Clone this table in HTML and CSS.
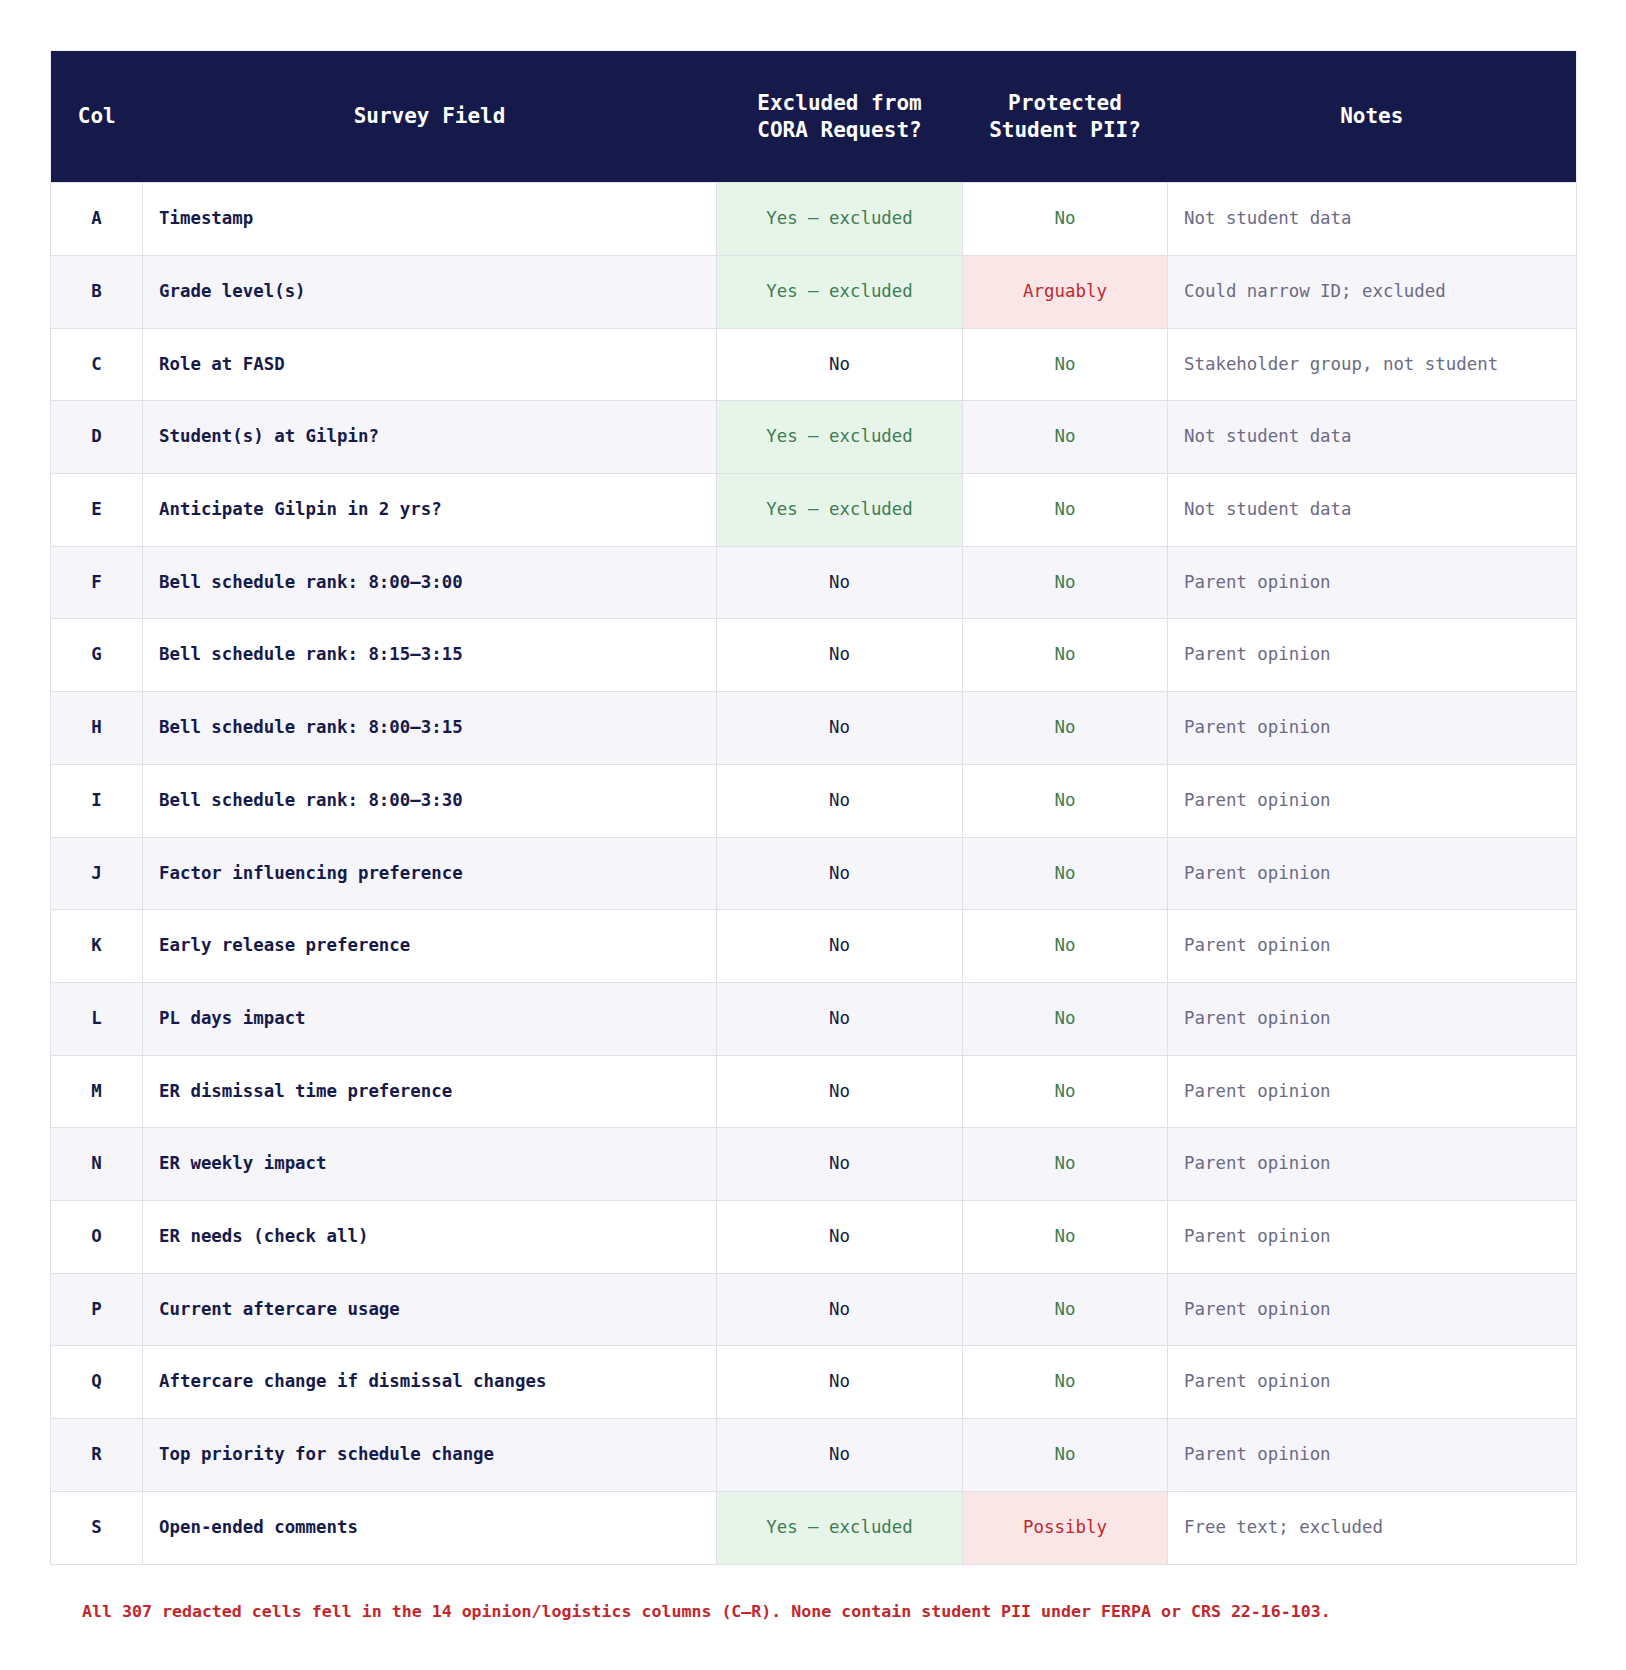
FILE: index.html
```html
<!DOCTYPE html>
<html lang="en">
<head>
<meta charset="utf-8">
<title>CORA Survey Field Review</title>
<link rel="stylesheet" href="styles.css">
</head>
<body>
<div class="page">
  <table class="fields">
    <colgroup>
      <col class="c-col">
      <col class="c-field">
      <col class="c-excl">
      <col class="c-pii">
      <col class="c-notes">
    </colgroup>
    <thead>
      <tr>
        <th>Col</th>
        <th>Survey Field</th>
        <th>Excluded from<br>CORA Request?</th>
        <th>Protected<br>Student PII?</th>
        <th>Notes</th>
      </tr>
    </thead>
    <tbody>
      <tr><td class="letter">A</td><td class="field">Timestamp</td><td class="yes">Yes — excluded</td><td class="no-g">No</td><td class="note">Not student data</td></tr>
      <tr><td class="letter">B</td><td class="field">Grade level(s)</td><td class="yes">Yes — excluded</td><td class="risk">Arguably</td><td class="note">Could narrow ID; excluded</td></tr>
      <tr><td class="letter">C</td><td class="field">Role at FASD</td><td class="no">No</td><td class="no-g">No</td><td class="note">Stakeholder group, not student</td></tr>
      <tr><td class="letter">D</td><td class="field">Student(s) at Gilpin?</td><td class="yes">Yes — excluded</td><td class="no-g">No</td><td class="note">Not student data</td></tr>
      <tr><td class="letter">E</td><td class="field">Anticipate Gilpin in 2 yrs?</td><td class="yes">Yes — excluded</td><td class="no-g">No</td><td class="note">Not student data</td></tr>
      <tr><td class="letter">F</td><td class="field">Bell schedule rank: 8:00–3:00</td><td class="no">No</td><td class="no-g">No</td><td class="note">Parent opinion</td></tr>
      <tr><td class="letter">G</td><td class="field">Bell schedule rank: 8:15–3:15</td><td class="no">No</td><td class="no-g">No</td><td class="note">Parent opinion</td></tr>
      <tr><td class="letter">H</td><td class="field">Bell schedule rank: 8:00–3:15</td><td class="no">No</td><td class="no-g">No</td><td class="note">Parent opinion</td></tr>
      <tr><td class="letter">I</td><td class="field">Bell schedule rank: 8:00–3:30</td><td class="no">No</td><td class="no-g">No</td><td class="note">Parent opinion</td></tr>
      <tr><td class="letter">J</td><td class="field">Factor influencing preference</td><td class="no">No</td><td class="no-g">No</td><td class="note">Parent opinion</td></tr>
      <tr><td class="letter">K</td><td class="field">Early release preference</td><td class="no">No</td><td class="no-g">No</td><td class="note">Parent opinion</td></tr>
      <tr><td class="letter">L</td><td class="field">PL days impact</td><td class="no">No</td><td class="no-g">No</td><td class="note">Parent opinion</td></tr>
      <tr><td class="letter">M</td><td class="field">ER dismissal time preference</td><td class="no">No</td><td class="no-g">No</td><td class="note">Parent opinion</td></tr>
      <tr><td class="letter">N</td><td class="field">ER weekly impact</td><td class="no">No</td><td class="no-g">No</td><td class="note">Parent opinion</td></tr>
      <tr><td class="letter">O</td><td class="field">ER needs (check all)</td><td class="no">No</td><td class="no-g">No</td><td class="note">Parent opinion</td></tr>
      <tr><td class="letter">P</td><td class="field">Current aftercare usage</td><td class="no">No</td><td class="no-g">No</td><td class="note">Parent opinion</td></tr>
      <tr><td class="letter">Q</td><td class="field">Aftercare change if dismissal changes</td><td class="no">No</td><td class="no-g">No</td><td class="note">Parent opinion</td></tr>
      <tr><td class="letter">R</td><td class="field">Top priority for schedule change</td><td class="no">No</td><td class="no-g">No</td><td class="note">Parent opinion</td></tr>
      <tr><td class="letter">S</td><td class="field">Open-ended comments</td><td class="yes">Yes — excluded</td><td class="risk">Possibly</td><td class="note">Free text; excluded</td></tr>
    </tbody>
  </table>
  <p class="footnote">All 307 redacted cells fell in the 14 opinion/logistics columns (C–R). None contain student PII under FERPA or CRS 22-16-103.</p>
</div>
</body>
</html>
```

FILE: styles.css
```css
html, body {
  margin: 0;
  padding: 0;
  background: #ffffff;
}

body {
  font-family: "DejaVu Sans Mono", "Liberation Mono", monospace;
  color: #161a4a;
}

.page {
  padding: 50px 50px 20px 50px;
}

.fields {
  width: 1526px;
  border-collapse: collapse;
  table-layout: fixed;
  border: 1px solid #ececf2;
}

.c-col { width: 92px; }
.c-field { width: 574px; }
.c-excl { width: 246px; }
.c-pii { width: 205px; }
.c-notes { width: 409px; }

.fields thead th {
  background: #161a4a;
  color: #ffffff;
  font-weight: bold;
  font-size: 21px;
  line-height: 26.6px;
  padding: 39px 8px;
  text-align: center;
  border: none;
}

.fields tbody td {
  font-size: 17.4px;
  line-height: 27.7px;
  padding: 22px 16px;
  border: 1px solid #e0e0e8;
  border-top: none;
  background: #ffffff;
  white-space: nowrap;
}

.fields tbody tr:nth-child(even) td {
  background: #f5f5fa;
}

.fields tbody tr:first-child td {
  border-top: 1px solid #e0e0e8;
}

.letter {
  text-align: center;
  font-weight: bold;
  color: #161a4a;
}

.field {
  text-align: left;
  font-weight: bold;
  color: #161a4a;
}

.no {
  text-align: center;
  color: #161a4a;
}

.no-g {
  text-align: center;
  color: #3e7d50;
}

.fields tbody tr td.yes {
  text-align: center;
  color: #3e7d50;
  background: #e7f4ea;
}

.fields tbody tr td.risk {
  text-align: center;
  color: #c1272d;
  background: #fbe6e7;
}

.note {
  text-align: left;
  color: #6d6a86;
}

.footnote {
  margin: 34px 0 0 0;
  padding-left: 32px;
  font-size: 16.6px;
  line-height: 25px;
  font-weight: bold;
  color: #c1272d;
}
```
